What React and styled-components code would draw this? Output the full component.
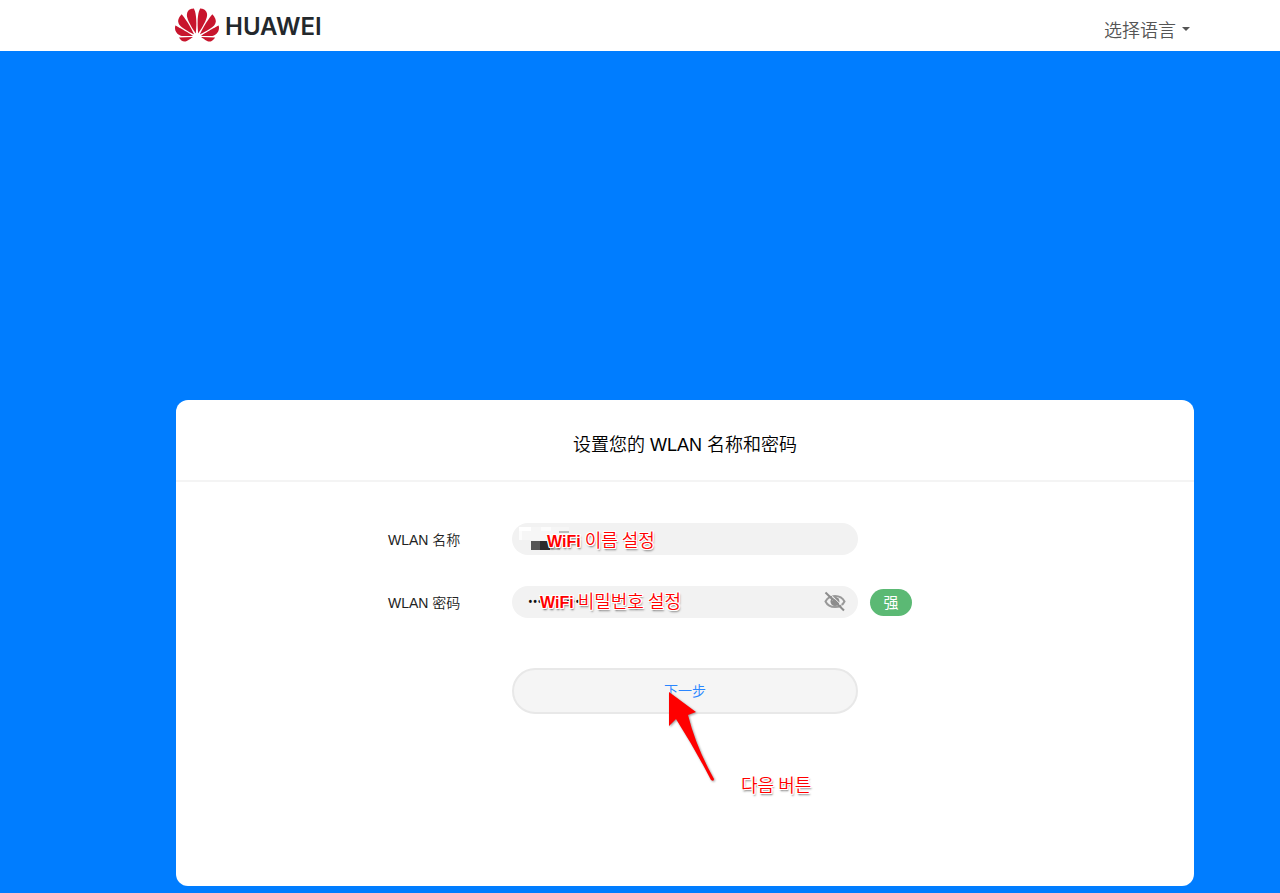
import React, { useState } from 'react';
import styled, { createGlobalStyle } from 'styled-components';
import { SiHuawei } from 'react-icons/si';

const GlobalStyle = createGlobalStyle`
  * {
    box-sizing: border-box;
  }

  body {
    margin: 0;
    background: #007dff;
    color: #000;
    font-family: 'Liberation Sans', 'Noto Sans CJK SC', sans-serif;
    font-size: 14px;
  }
`;

const Page = styled.div`
  display: flex;
  flex-direction: column;
  min-height: 100vh;
`;

const Header = styled.header`
  display: flex;
  justify-content: space-between;
  align-items: center;
  height: 51px;
  padding: 0 90px 2px 175px;
  background: #fff;
`;

const Logo = styled.a`
  display: flex;
  align-items: center;
  gap: 6px;
  color: #23282c;
  text-decoration: none;

  svg {
    color: #c8152d;
  }
`;

const Wordmark = styled.span`
  padding-top: 4px;
  font-family: Inter, sans-serif;
  font-size: 24px;
  font-weight: 600;
  line-height: 32px;
`;

const Language = styled.label`
  display: flex;
  align-items: center;
  gap: 6px;
  padding-top: 8px;
`;

const LanguageSelect = styled.select`
  appearance: none;
  padding: 0;
  border: none;
  background: transparent;
  color: #555;
  font-family: 'Noto Sans CJK SC', sans-serif;
  font-size: 18px;
  font-weight: 350;
  line-height: 28px;
  cursor: pointer;
`;

const Caret = styled.span`
  border: 4px solid transparent;
  border-top-color: #555;
  border-bottom: none;
`;

const Main = styled.main`
  display: flex;
  flex: 1;
  flex-direction: column;
  justify-content: flex-end;
  padding: 40px 86px 7px 176px;
`;

const Card = styled.section`
  min-height: 486px;
  border-radius: 12px;
  background: #fff;
`;

const Title = styled.h1`
  margin: 0;
  padding: 30px 0 20px;
  border-bottom: 2px solid #f4f4f4;
  font-size: 18px;
  font-weight: 350;
  line-height: 30px;
  text-align: center;
`;

const Form = styled.form`
  display: flex;
  flex-direction: column;
  gap: 31px;
  padding: 41px 0;
`;

const Row = styled.div`
  display: grid;
  grid-template-columns: 1fr 346px 1fr;
  align-items: center;
`;

const Label = styled.label`
  justify-self: end;
  width: 124px;
  padding-top: 2px;
  color: #222;
  font-weight: 350;
  line-height: 20px;
`;

const Field = styled.div`
  position: relative;
  grid-column: 2;
`;

const Input = styled.input`
  display: block;
  width: 100%;
  height: 32px;
  padding: 0 40px 0 16px;
  border: none;
  border-radius: 16px;
  background: #f2f2f2;
  color: #111;
  font-family: Roboto, sans-serif;
  font-size: 14px;
`;

const EyeButton = styled.button`
  position: absolute;
  top: 3px;
  right: 11px;
  width: 24px;
  height: 24px;
  padding: 0;
  border: none;
  background: transparent;
  cursor: pointer;

  svg {
    display: block;
  }
`;

const Strength = styled.span`
  width: 42px;
  margin-left: 12px;
  border-radius: 14px;
  background: #5bb974;
  color: #fff;
  font-size: 15px;
  line-height: 27px;
  text-align: center;
`;

const Actions = styled(Row)`
  padding-top: 19px;
`;

const NextButton = styled.button`
  display: block;
  width: 100%;
  height: 46px;
  padding: 0 0 2px;
  border: 2px solid #e8e8e8;
  border-radius: 23px;
  background: #f5f5f5;
  color: #2a86ff;
  font-family: 'Noto Sans CJK SC', sans-serif;
  font-size: 14px;
  font-weight: 350;
  cursor: pointer;
`;

// tutorial notes drawn over the form
const Note = styled.span`
  position: absolute;
  top: ${({ $top }) => $top}px;
  left: ${({ $left }) => $left}px;
  color: #f00;
  font-family: 'Noto Sans CJK KR', sans-serif;
  font-size: 18px;
  font-weight: 350;
  line-height: 24px;
  white-space: nowrap;
  text-shadow: 1px 0 #fff, -1px 0 #fff, 0 1px #fff, 0 -1px #fff, 1px 1px #fff,
    -1px -1px #fff, 1px -1px #fff, -1px 1px #fff, 1px 2px 2px #666;
  pointer-events: none;

  b {
    font-family: 'Liberation Sans', sans-serif;
    font-size: 16px;
    font-weight: 700;
  }
`;

const Mosaic = styled.svg`
  position: absolute;
  top: 4px;
  left: 7px;
  pointer-events: none;
`;

const Arrow = styled.svg`
  position: absolute;
  top: 21px;
  left: 155px;
  filter: drop-shadow(1px 1px 1px #999);
  pointer-events: none;
`;

const EyeOff = () => (
  <svg width="24" height="24" viewBox="0 0 24 24" fill="none">
    <path
      d="M2.500 12.500C4.500 8.500 8 7 12 7s7.500 1.500 9.500 5.500c-2 4-5.500 5.500-9.500 5.500s-7.500-1.500-9.500-5.500z"
      stroke="#999"
      strokeWidth="2"
    />
    <circle cx="12" cy="12.500" r="4.500" fill="#8c8c8c" />
    <path d="M9.500 12a2.500 2.500 0 0 1 2.500-2.500" stroke="#f2f2f2" />
    <path d="M4.500 2.500l18.500 18" stroke="#f2f2f2" />
    <path d="M2.500 3.500l18.500 18" stroke="#8c8c8c" strokeWidth="2" />
  </svg>
);

const App = () => {
  const [name, setName] = useState('');
  const [password, setPassword] = useState('Wlan1234567');
  const [isVisible, setIsVisible] = useState(false);

  return (
    <>
      <GlobalStyle />
      <Page>
        <Header>
          <Logo href="#home">
            <SiHuawei size={44} />
            <Wordmark>HUAWEI</Wordmark>
          </Logo>
          <Language>
            <LanguageSelect aria-label="选择语言">
              <option>选择语言</option>
            </LanguageSelect>
            <Caret />
          </Language>
        </Header>

        <Main>
          <Card>
            <Title>设置您的 WLAN 名称和密码</Title>
            <Form onSubmit={e => e.preventDefault()}>
              <Row>
                <Label htmlFor="name">WLAN 名称</Label>
                <Field>
                  <Input
                    id="name"
                    value={name}
                    onChange={e => setName(e.target.value)}
                  />
                  <Mosaic width="60" height="24" shapeRendering="crispEdges">
                    <rect width="50" height="13" fill="#f6f6f6" />
                    <rect width="12" height="4" fill="#fff" />
                    <rect y="4" width="3" height="9" fill="#fcfcfc" />
                    <rect x="22" width="10" height="4" fill="#fcfcfc" />
                    <rect x="40" y="4" width="10" height="2" fill="#bbb" />
                    <rect x="12" y="14" width="9" height="9" fill="#555" />
                    <rect x="21" y="14" width="10" height="9" fill="#2b2b2b" />
                    <rect x="31" y="14" width="10" height="9" fill="#bbb" />
                  </Mosaic>
                  <Note $top={4} $left={35}>
                    <b>WiFi</b> 이름 설정
                  </Note>
                </Field>
              </Row>

              <Row>
                <Label htmlFor="password">WLAN 密码</Label>
                <Field>
                  <Input
                    id="password"
                    type={isVisible ? 'text' : 'password'}
                    value={password}
                    onChange={e => setPassword(e.target.value)}
                  />
                  <EyeButton
                    type="button"
                    aria-label="显示密码"
                    onClick={() => setIsVisible(!isVisible)}
                  >
                    <EyeOff />
                  </EyeButton>
                  <Note $top={2} $left={28}>
                    <b>WiFi</b> 비밀번호 설정
                  </Note>
                </Field>
                <Strength>强</Strength>
              </Row>

              <Actions>
                <Field>
                  <NextButton type="submit">下一步</NextButton>
                  <Arrow width="52" height="96" viewBox="0 0 52 96">
                    <path
                      d="M2 3L29 23L21 26Q29 58 47 90Q47 93 44 91Q28 60 9 30L2 37z"
                      fill="#f00"
                    />
                  </Arrow>
                  <Note $top={104} $left={229}>
                    다음 버튼
                  </Note>
                </Field>
              </Actions>
            </Form>
          </Card>
        </Main>
      </Page>
    </>
  );
};

export default App;
